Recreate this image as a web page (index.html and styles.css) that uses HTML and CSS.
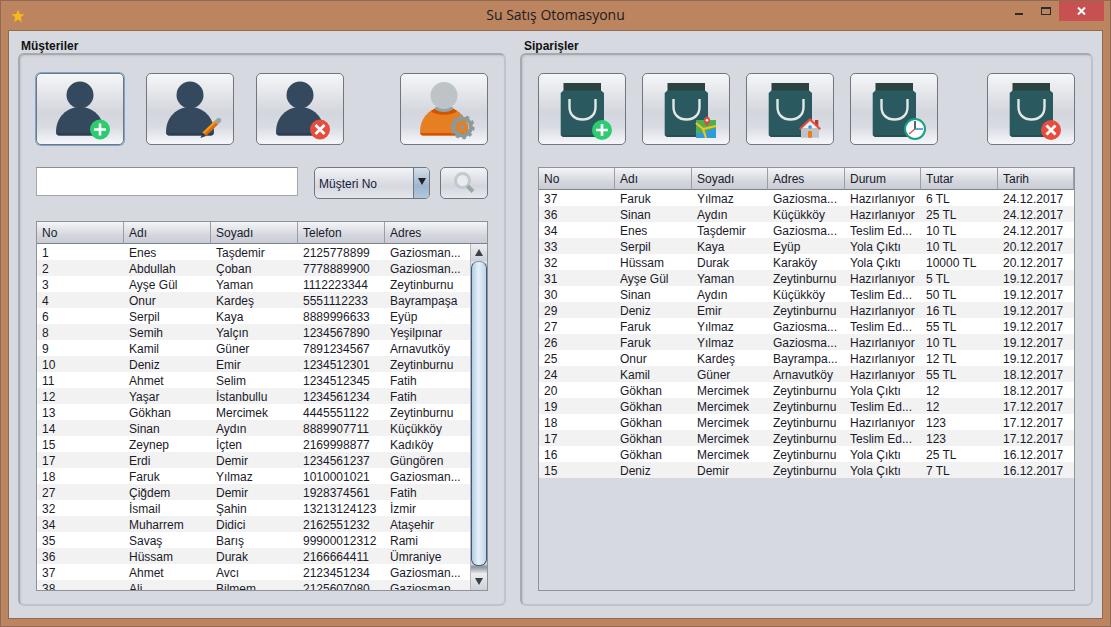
FILE: index.html
```html
<!DOCTYPE html>
<html lang="tr">
<head>
    <meta charset="UTF-8">
    <title>Su Satış Otomasyonu</title>
    <link rel="stylesheet" href="styles.css">
</head>
<body>
    <svg class="defs" width="0" height="0">
        <defs>
            <g id="user">
                <circle cx="33" cy="19" r="13.5" fill="#34495e"/>
                <path d="M9 56 C9 41 20 31 33 31 C46 31 57 41 57 56 C57 58 56 59.5 54 59.5 L12 59.5 C10 59.5 9 58 9 56Z" fill="#34495e"/>
                <path d="M9.3 57 C9.6 58.6 10.6 59.5 12 59.5 L54 59.5 C55.4 59.5 56.4 58.6 56.7 57Z" fill="#2c3e50"/>
            </g>
            <g id="bag">
                <path d="M14.5 7 H52 V15 H14.5Z" fill="#2a4340"/>
                <path d="M14.5 14.5 H52 L55 17 V59 L53 61 H14 L11.7 59 V17Z" fill="#2a5a60"/>
                <path d="M11.7 59 L14 61 H53 L55 59Z" fill="#26504f"/>
                <path d="M20.5 23 V31 C20.5 39 26 43.5 33.5 43.5 C41 43.5 46.5 39 46.5 31 V23" fill="none" stroke="#e4e6e4" stroke-width="2.4"/>
            </g>
            <g id="plus">
                <circle cx="10" cy="10" r="10" fill="#2ecc71"/>
                <path d="M10 4 V16 M4 10 H16" stroke="#fff" stroke-width="2.6"/>
            </g>
            <g id="cross">
                <circle cx="10" cy="10" r="10" fill="#e74c3c"/>
                <path d="M5.5 5.5 L14.5 14.5 M14.5 5.5 L5.5 14.5" stroke="#fff" stroke-width="2.8"/>
            </g>
        </defs>
    </svg>

    <div class="window">
        <div class="titlebar">
            <svg class="title-star" width="14" height="14" viewBox="0 0 14 14"><path d="M7 0.5 L8.8 5 L13.5 5.3 L9.8 8.3 L11 13 L7 10.4 L3 13 L4.2 8.3 L0.5 5.3 L5.2 5Z" fill="#f6b81a"/></svg>
            <span class="title-text">Su Satış Otomasyonu</span>
            <div class="win-controls">
                <span class="win-min"></span>
                <span class="win-max"></span>
                <span class="win-close">
                    <svg width="9" height="8" viewBox="0 0 9 8"><path d="M1 0.5 L8 7.5 M8 0.5 L1 7.5" stroke="#fff" stroke-width="2"/></svg>
                </span>
            </div>
        </div>

        <div class="content">
            <section class="group group-customers">
                <h4 class="group-title">Müşteriler</h4>
                <div class="group-box">
                    <div class="toolbar">
                        <button class="icon-btn focused">
                            <svg width="66" height="66" viewBox="0 0 66 66"><use href="#user"/><use href="#plus" x="43" y="43.5"/></svg>
                        </button>
                        <button class="icon-btn">
                            <svg width="66" height="66" viewBox="0 0 66 66">
                                <use href="#user"/>
                                <path d="M45.5 56.5 L57.5 45 L61 48.5 L49 60Z" fill="#d96a12"/>
                                <path d="M45.5 56.5 L57.5 45 L59 46.5 L47 58Z" fill="#f39c12"/>
                                <path d="M57.5 45 L60 42.5 C61 41.5 62.5 41.5 63.5 42.5 C64.5 43.5 64.5 45 63.5 46 L61 48.5Z" fill="#95a5a6"/>
                                <path d="M43.5 62 L45.5 56.5 L49 60Z" fill="#2c3e50"/>
                            </svg>
                        </button>
                        <button class="icon-btn">
                            <svg width="66" height="66" viewBox="0 0 66 66"><use href="#user"/><use href="#cross" x="43" y="43.5"/></svg>
                        </button>
                        <button class="icon-btn push">
                            <svg width="66" height="66" viewBox="0 0 66 66">
                                <path d="M9 56 C9 41 20 31 33 31 C46 31 57 41 57 56 C57 58 56 59.5 54 59.5 L12 59.5 C10 59.5 9 58 9 56Z" fill="#e67e22"/>
                                <path d="M9.3 57 C9.6 58.6 10.6 59.5 12 59.5 L54 59.5 C55.4 59.5 56.4 58.6 56.7 57Z" fill="#d35400"/>
                                <path d="M20 35 C24 32 28 31 33 31 C38 31 42 32 46 35 C42 40 24 40 20 35Z" fill="#d35400"/>
                                <path d="M24 31 H42 V33 C38 37 28 37 24 33Z" fill="#95a5a6"/>
                                <circle cx="33" cy="19.5" r="13.5" fill="#bdc3c7"/>
                                <circle cx="51.5" cy="51" r="8.5" fill="none" stroke="#8b9a9b" stroke-width="4"/>
                                <circle cx="51.5" cy="51" r="11" fill="none" stroke="#8b9a9b" stroke-width="2.4" stroke-dasharray="3.4 3.5"/>
                                <circle cx="51.5" cy="51" r="6" fill="#e67e22"/>
                                <circle cx="51.5" cy="51" r="2.4" fill="#8b9a9b"/>
                            </svg>
                        </button>
                    </div>

                    <div class="search-row">
                        <input class="search-input" type="text">
                        <div class="combo">
                            <span class="combo-text">Müşteri No</span>
                            <span class="combo-arrow"><i></i></span>
                        </div>
                        <button class="search-btn">
                            <svg width="24" height="24" viewBox="0 0 24 24">
                                <circle cx="10.5" cy="9.5" r="7" fill="#e9ecee" stroke="#c3cacb" stroke-width="3"/>
                                <path d="M15.5 15 L21 20.5" stroke="#9aa7a8" stroke-width="4"/>
                            </svg>
                        </button>
                    </div>

                    <div class="table-frame customers-frame">
                        <div class="table-main">
                            <table class="grid">
                                <colgroup>
                                    <col class="cw-87"><col class="cw-87"><col class="cw-87"><col class="cw-87"><col class="cw-87">
                                </colgroup>
                                <thead>
                                    <tr><th>No</th><th>Adı</th><th>Soyadı</th><th>Telefon</th><th>Adres</th></tr>
                                </thead>
                                <tbody>
                                    <tr><td>1</td><td>Enes</td><td>Taşdemir</td><td>2125778899</td><td>Gaziosman...</td></tr>
                                    <tr><td>2</td><td>Abdullah</td><td>Çoban</td><td>7778889900</td><td>Gaziosman...</td></tr>
                                    <tr><td>3</td><td>Ayşe Gül</td><td>Yaman</td><td>1112223344</td><td>Zeytinburnu</td></tr>
                                    <tr><td>4</td><td>Onur</td><td>Kardeş</td><td>5551112233</td><td>Bayrampaşa</td></tr>
                                    <tr><td>6</td><td>Serpil</td><td>Kaya</td><td>8889996633</td><td>Eyüp</td></tr>
                                    <tr><td>8</td><td>Semih</td><td>Yalçın</td><td>1234567890</td><td>Yeşilpınar</td></tr>
                                    <tr><td>9</td><td>Kamil</td><td>Güner</td><td>7891234567</td><td>Arnavutköy</td></tr>
                                    <tr><td>10</td><td>Deniz</td><td>Emir</td><td>1234512301</td><td>Zeytinburnu</td></tr>
                                    <tr><td>11</td><td>Ahmet</td><td>Selim</td><td>1234512345</td><td>Fatih</td></tr>
                                    <tr><td>12</td><td>Yaşar</td><td>İstanbullu</td><td>1234561234</td><td>Fatih</td></tr>
                                    <tr><td>13</td><td>Gökhan</td><td>Mercimek</td><td>4445551122</td><td>Zeytinburnu</td></tr>
                                    <tr><td>14</td><td>Sinan</td><td>Aydın</td><td>8889907711</td><td>Küçükköy</td></tr>
                                    <tr><td>15</td><td>Zeynep</td><td>İçten</td><td>2169998877</td><td>Kadıköy</td></tr>
                                    <tr><td>17</td><td>Erdi</td><td>Demir</td><td>1234561237</td><td>Güngören</td></tr>
                                    <tr><td>18</td><td>Faruk</td><td>Yılmaz</td><td>1010001021</td><td>Gaziosman...</td></tr>
                                    <tr><td>27</td><td>Çiğdem</td><td>Demir</td><td>1928374561</td><td>Fatih</td></tr>
                                    <tr><td>32</td><td>İsmail</td><td>Şahin</td><td>13213124123</td><td>İzmir</td></tr>
                                    <tr><td>34</td><td>Muharrem</td><td>Didici</td><td>2162551232</td><td>Ataşehir</td></tr>
                                    <tr><td>35</td><td>Savaş</td><td>Barış</td><td>99900012312</td><td>Rami</td></tr>
                                    <tr><td>36</td><td>Hüssam</td><td>Durak</td><td>2166664411</td><td>Ümraniye</td></tr>
                                    <tr><td>37</td><td>Ahmet</td><td>Avcı</td><td>2123451234</td><td>Gaziosman...</td></tr>
                                    <tr><td>38</td><td>Ali</td><td>Bilmem</td><td>2125607080</td><td>Gaziosman...</td></tr>
                                </tbody>
                            </table>
                        </div>
                        <div class="scroll-col">
                            <div class="scroll-corner"></div>
                            <div class="scrollbar">
                                <span class="scroll-btn up"><i></i></span>
                                <div class="scroll-track"><div class="scroll-thumb"></div></div>
                                <span class="scroll-btn down"><i></i></span>
                            </div>
                        </div>
                    </div>
                </div>
            </section>

            <section class="group group-orders">
                <h4 class="group-title">Siparişler</h4>
                <div class="group-box">
                    <div class="toolbar">
                        <button class="icon-btn">
                            <svg width="66" height="66" viewBox="0 0 66 66"><use href="#bag"/><use href="#plus" x="43" y="44"/></svg>
                        </button>
                        <button class="icon-btn">
                            <svg width="66" height="66" viewBox="0 0 66 66">
                                <use href="#bag"/>
                                <path d="M43 44 H63 V62 H43Z" fill="#4caf50"/>
                                <path d="M43 58 L54 55 L63 52 V62 H43Z" fill="#2f9bd8"/>
                                <path d="M43 47 L50 53 L53 62 M50 53 L63 50" fill="none" stroke="#f4c21f" stroke-width="2.2"/>
                                <path d="M54 50 C50 46 50 41 54 40.7 C58 41 58 46 54 50Z" fill="#e2483b"/>
                                <circle cx="54" cy="44.3" r="1.3" fill="#fff"/>
                            </svg>
                        </button>
                        <button class="icon-btn">
                            <svg width="66" height="66" viewBox="0 0 66 66">
                                <use href="#bag"/>
                                <path d="M44 52 H62 V61.7 H44Z" fill="#bdc3c7"/>
                                <path d="M53 44 L44 52 H62Z" fill="#ecf0f1"/>
                                <path d="M58 44 H61.3 V50 H58Z" fill="#c0392b"/>
                                <path d="M42 52.5 L53 42 L64 52.5 L62.6 54 L53 45 L43.4 54Z" fill="#e74c3c"/>
                                <circle cx="53" cy="51" r="1.8" fill="#3498db"/>
                                <path d="M51 55 H55 V61.7 H51Z" fill="#e67e22"/>
                            </svg>
                        </button>
                        <button class="icon-btn">
                            <svg width="66" height="66" viewBox="0 0 66 66">
                                <use href="#bag"/>
                                <circle cx="54" cy="53" r="10" fill="#fff" stroke="#16a085" stroke-width="2"/>
                                <path d="M54 53 V45" stroke="#2c3e50" stroke-width="1.6"/>
                                <path d="M54 53 H62" stroke="#3498db" stroke-width="1.6"/>
                                <path d="M54 53 L48 58" stroke="#e74c3c" stroke-width="1.2"/>
                            </svg>
                        </button>
                        <button class="icon-btn push">
                            <svg width="66" height="66" viewBox="0 0 66 66"><use href="#bag"/><use href="#cross" x="43" y="44"/></svg>
                        </button>
                    </div>

                    <div class="table-frame orders-frame">
                        <div class="table-main">
                            <table class="grid">
                                <colgroup>
                                    <col class="cw-76"><col class="cw-77"><col class="cw-76"><col class="cw-77"><col class="cw-76"><col class="cw-77"><col class="cw-76">
                                </colgroup>
                                <thead>
                                    <tr><th>No</th><th>Adı</th><th>Soyadı</th><th>Adres</th><th>Durum</th><th>Tutar</th><th>Tarih</th></tr>
                                </thead>
                                <tbody>
                                    <tr><td>37</td><td>Faruk</td><td>Yılmaz</td><td>Gaziosma...</td><td>Hazırlanıyor</td><td>6 TL</td><td>24.12.2017</td></tr>
                                    <tr><td>36</td><td>Sinan</td><td>Aydın</td><td>Küçükköy</td><td>Hazırlanıyor</td><td>25 TL</td><td>24.12.2017</td></tr>
                                    <tr><td>34</td><td>Enes</td><td>Taşdemir</td><td>Gaziosma...</td><td>Teslim Ed...</td><td>10 TL</td><td>24.12.2017</td></tr>
                                    <tr><td>33</td><td>Serpil</td><td>Kaya</td><td>Eyüp</td><td>Yola Çıktı</td><td>10 TL</td><td>20.12.2017</td></tr>
                                    <tr><td>32</td><td>Hüssam</td><td>Durak</td><td>Karaköy</td><td>Yola Çıktı</td><td>10000 TL</td><td>20.12.2017</td></tr>
                                    <tr><td>31</td><td>Ayşe Gül</td><td>Yaman</td><td>Zeytinburnu</td><td>Hazırlanıyor</td><td>5 TL</td><td>19.12.2017</td></tr>
                                    <tr><td>30</td><td>Sinan</td><td>Aydın</td><td>Küçükköy</td><td>Teslim Ed...</td><td>50 TL</td><td>19.12.2017</td></tr>
                                    <tr><td>29</td><td>Deniz</td><td>Emir</td><td>Zeytinburnu</td><td>Hazırlanıyor</td><td>16 TL</td><td>19.12.2017</td></tr>
                                    <tr><td>27</td><td>Faruk</td><td>Yılmaz</td><td>Gaziosma...</td><td>Teslim Ed...</td><td>55 TL</td><td>19.12.2017</td></tr>
                                    <tr><td>26</td><td>Faruk</td><td>Yılmaz</td><td>Gaziosma...</td><td>Hazırlanıyor</td><td>10 TL</td><td>19.12.2017</td></tr>
                                    <tr><td>25</td><td>Onur</td><td>Kardeş</td><td>Bayrampa...</td><td>Hazırlanıyor</td><td>12 TL</td><td>19.12.2017</td></tr>
                                    <tr><td>24</td><td>Kamil</td><td>Güner</td><td>Arnavutköy</td><td>Hazırlanıyor</td><td>55 TL</td><td>18.12.2017</td></tr>
                                    <tr><td>20</td><td>Gökhan</td><td>Mercimek</td><td>Zeytinburnu</td><td>Yola Çıktı</td><td>12</td><td>18.12.2017</td></tr>
                                    <tr><td>19</td><td>Gökhan</td><td>Mercimek</td><td>Zeytinburnu</td><td>Teslim Ed...</td><td>12</td><td>17.12.2017</td></tr>
                                    <tr><td>18</td><td>Gökhan</td><td>Mercimek</td><td>Zeytinburnu</td><td>Hazırlanıyor</td><td>123</td><td>17.12.2017</td></tr>
                                    <tr><td>17</td><td>Gökhan</td><td>Mercimek</td><td>Zeytinburnu</td><td>Teslim Ed...</td><td>123</td><td>17.12.2017</td></tr>
                                    <tr><td>16</td><td>Gökhan</td><td>Mercimek</td><td>Zeytinburnu</td><td>Yola Çıktı</td><td>25 TL</td><td>16.12.2017</td></tr>
                                    <tr><td>15</td><td>Deniz</td><td>Demir</td><td>Zeytinburnu</td><td>Yola Çıktı</td><td>7 TL</td><td>16.12.2017</td></tr>
                                </tbody>
                            </table>
                        </div>
                    </div>
                </div>
            </section>
        </div>
    </div>
</body>
</html>
```

FILE: styles.css
```css
* {
    box-sizing: border-box;
}
html, body {
    margin: 0;
    height: 100%;
    overflow: hidden;
}
.defs {
    display: block;
    height: 0;
}
.window {
    width: 1111px;
    height: 627px;
    background: #bc845f;
    border: 1px solid #8f6a52;
    padding: 0 7px 7px 7px;
    display: flex;
    flex-direction: column;
    font-family: "Liberation Sans", Arial, sans-serif;
    font-size: 12px;
    color: #1a1a2a;
}
.titlebar {
    height: 29px;
    display: flex;
    align-items: center;
    position: relative;
    flex: none;
}
.title-star {
    margin: 0 0 0 3px;
}
.title-text {
    position: absolute;
    left: 0;
    right: 0;
    text-align: center;
    font-family: "Open Sans", sans-serif;
    font-size: 14px;
    color: #1c1c1c;
    top: 4px;
}
.win-controls {
    margin-left: auto;
    display: flex;
    align-items: flex-start;
    height: 100%;
    margin-right: -1px;
}
.win-min {
    width: 8px;
    height: 2px;
    background: #2b2b2b;
    margin-top: 12px;
    margin-right: 18px;
}
.win-max {
    width: 10px;
    height: 8px;
    border: 1px solid #2b2b2b;
    border-top-width: 2px;
    margin-top: 6px;
    margin-right: 8px;
}
.win-close {
    width: 45px;
    height: 20px;
    background: #c75050;
    display: flex;
    align-items: center;
    justify-content: center;
    margin-top: 0;
}
.content {
    flex: 1;
    background: #d6d9e0;
    border: 1px solid #8f6a52;
    display: flex;
    gap: 14px;
    padding: 8px 9px 12px 9px;
    min-height: 0;
}
.group {
    display: flex;
    flex-direction: column;
    min-width: 0;
    min-height: 0;
}
.group-customers {
    width: 488px;
}
.group-orders {
    width: 573px;
}
.group-title {
    margin: 0 0 0 3px;
    font-size: 12px;
    line-height: 14px;
    font-weight: bold;
    color: #111;
}
.group-orders .group-title {
    margin-left: 4px;
}
.group-box {
    flex: 1;
    min-height: 0;
    border: 2px solid #a6a9af;
    border-right-color: #c0c3c9;
    border-bottom-color: #c0c3c9;
    border-radius: 6px;
    box-shadow: inset 1px 1px 2px #c2c5cb;
    padding: 18px 16px 13px 16px;
    display: flex;
    flex-direction: column;
}
.toolbar {
    display: flex;
    gap: 22px;
    flex: none;
}
.push {
    margin-left: auto;
}
.icon-btn {
    width: 88px;
    height: 72px;
    padding: 0;
    border: 1px solid #72777f;
    border-radius: 5px;
    background: linear-gradient(#f5f6f8 0%, #d3d6dd 55%, #d8dbe2 75%, #f6f7fb 100%);
    display: flex;
    align-items: center;
    justify-content: center;
}
.icon-btn.focused {
    box-shadow: 0 0 0 1px #7aa5d2;
}
.group-orders .toolbar {
    gap: 16px;
}
.search-row {
    display: flex;
    margin-top: 22px;
    height: 32px;
    flex: none;
    align-items: flex-start;
}
.search-input {
    width: 262px;
    height: 29px;
    background: #fff;
    border: 1px solid #a4a6aa;
    border-top-color: #8b8d91;
    padding: 0;
    outline: none;
}
.combo {
    width: 116px;
    height: 32px;
    margin-left: 16px;
    border: 1px solid #72777f;
    border-radius: 5px;
    background: linear-gradient(#f3f4f7 0%, #d5d8df 60%, #e4e6ec 100%);
    display: flex;
    overflow: hidden;
}
.combo-text {
    flex: 1;
    padding-left: 4px;
    line-height: 32px;
    color: #1a1a3a;
}
.combo-arrow {
    width: 16px;
    background: linear-gradient(#d6dfe9 0%, #9db6ce 60%, #b4c8db 100%);
    border-left: 1px solid #72777f;
    display: flex;
    align-items: center;
    justify-content: center;
}
.combo-arrow i {
    width: 0;
    height: 0;
    border-left: 4px solid transparent;
    border-right: 4px solid transparent;
    border-top: 7px solid #222;
    margin-top: -4px;
}
.search-btn {
    width: 48px;
    height: 32px;
    margin-left: 10px;
    padding: 0;
    border: 1px solid #72777f;
    border-radius: 5px;
    background: linear-gradient(#f3f4f7 0%, #d3d6dd 60%, #e6e8ee 100%);
    display: flex;
    align-items: center;
    justify-content: center;
}
.table-frame {
    display: flex;
    flex: 1;
    min-height: 0;
    border: 1px solid #8e9299;
    background: #d6d9e0;
    overflow: hidden;
}
.customers-frame {
    margin-top: 22px;
}
.orders-frame {
    margin-top: 22px;
}
.table-main {
    flex: 1;
    min-width: 0;
    overflow: hidden;
}
.grid {
    border-collapse: separate;
    border-spacing: 0;
    table-layout: fixed;
    width: 100%;
    font-size: 12px;
}
.cw-87 {
    width: 87px;
}
.cw-76 {
    width: 76px;
}
.cw-77 {
    width: 77px;
}
.grid th {
    height: 22px;
    padding: 0 0 0 5px;
    font-weight: normal;
    text-align: left;
    color: #1a1a2a;
    background: linear-gradient(#f4f5f7 0%, #d3d6dd 65%, #c9ccd4 100%);
    border-right: 1px solid #9a9ea6;
    border-bottom: 1px solid #7d8188;
}
.grid td {
    height: 16px;
    padding: 2px 0 0 5px;
    line-height: 14px;
    white-space: nowrap;
    overflow: hidden;
    color: #1a1a2a;
}
.grid tbody tr:nth-child(odd) {
    background: #fff;
}
.grid tbody tr:nth-child(even) {
    background: #f2f2f2;
}
.scroll-col {
    width: 17px;
    flex: none;
    display: flex;
    flex-direction: column;
}
.scroll-corner {
    height: 22px;
    background: linear-gradient(#f4f5f7 0%, #d3d6dd 65%, #c9ccd4 100%);
    border-bottom: 1px solid #7d8188;
    flex: none;
}
.scrollbar {
    flex: 1;
    display: flex;
    flex-direction: column;
    min-height: 0;
    background: #e4e6eb;
    border-left: 1px solid #b5b8be;
}
.scroll-btn {
    height: 17px;
    flex: none;
    display: flex;
    align-items: center;
    justify-content: center;
    background: linear-gradient(#eceef1, #ced1d8);
}
.scroll-btn i {
    width: 0;
    height: 0;
    border-left: 4px solid transparent;
    border-right: 4px solid transparent;
}
.scroll-btn.up i {
    border-bottom: 7px solid #3c3f44;
}
.scroll-btn.down i {
    border-top: 7px solid #3c3f44;
}
.scroll-track {
    flex: 1;
    padding-bottom: 7px;
    display: flex;
    min-height: 0;
    background: linear-gradient(#dfe1e6 97%, #8f9299 98%, #dfe1e6);
}
.scroll-thumb {
    flex: 1;
    border: 1px solid #3e5a78;
    border-top-color: #7d9ab8;
    border-radius: 7px;
    background: linear-gradient(90deg, #b2cce3 0%, #e6f0f8 45%, #c0d6e9 100%);
}
```
